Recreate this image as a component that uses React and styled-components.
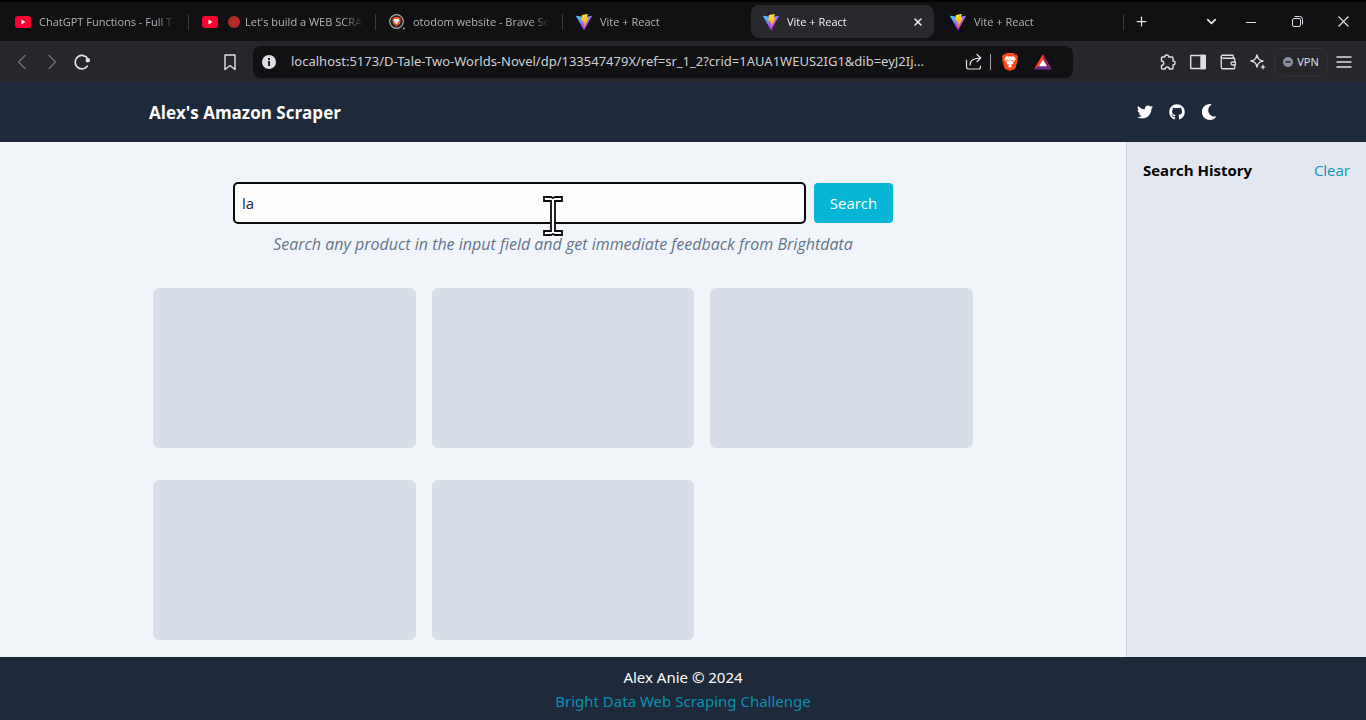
import React, { useId, useState } from "react";
import styled, { createGlobalStyle } from "styled-components";
import { Wallet, X, Plus, ChevronDown } from "lucide-react";
import { FaTwitter, FaGithub, FaMoon } from "react-icons/fa";

const GlobalStyle = createGlobalStyle`
  *, *::before, *::after { box-sizing: border-box; }
  body {
    margin: 0;
    font-family: "Open Sans", "Noto Sans", sans-serif;
    font-size: 15px;
    line-height: 24px;
    background: #f1f5f9;
  }
  button, input { font: inherit; }
  svg { display: block; flex: none; }
`;

const Window = styled.div`
  display: flex;
  flex-direction: column;
  min-height: 100vh;
`;

const TitleBar = styled.div`
  display: flex;
  align-items: center;
  height: 41px;
  padding-left: 3px;
  background: #111113;
  border-top: 2px solid #030303;
`;

const TabStrip = styled.nav`
  display: flex;
  align-items: center;
  flex: 0 1 1122px;
  min-width: 0;
`;

const Divider = styled.span`
  flex: none;
  width: 1px;
  height: 16px;
  margin: 0 1px 0 2px;
  background: ${(p) => (p.$hidden ? "transparent" : "#3a3a3e")};
`;

const Tab = styled.button`
  display: flex;
  align-items: center;
  gap: 8px;
  flex: 0 1 183px;
  min-width: 0;
  height: 33px;
  padding: 0 10px 0 12px;
  border: 0;
  border-radius: 8px;
  background: ${(p) => (p.$active ? "#28282d" : "transparent")};
  color: ${(p) => (p.$active ? "#f4f4f5" : "#b4b4b8")};
  font-size: 11px;
  line-height: 16px;
  text-align: left;
`;

const TabLabel = styled.span`
  display: flex;
  align-items: center;
  gap: 5px;
  flex: 1;
  overflow: hidden;
  white-space: nowrap;
  mask-image: linear-gradient(to right, #000 calc(100% - 20px), transparent);
`;

const LiveDot = styled.span`
  flex: none;
  width: 12px;
  height: 12px;
  margin-left: 2px;
  border-radius: 50%;
  background: #b32a29;
`;

const IconButton = styled.button`
  display: flex;
  align-items: center;
  justify-content: center;
  flex: none;
  width: ${(p) => p.$width || 30}px;
  height: 30px;
  padding: 0;
  border: 0;
  background: none;
  color: ${(p) => (p.$dim ? "#707075" : "#e0e0e4")};
`;

const WindowControls = styled.div`
  display: flex;
  margin-left: auto;
`;

const Toolbar = styled.div`
  display: flex;
  align-items: center;
  height: 41px;
  padding: 0 7px;
  background: #26262b;
`;

const NavGroup = styled.div`
  display: flex;
  align-items: center;
`;

const AddressGroup = styled.div`
  display: flex;
  align-items: center;
  gap: 8px;
  flex: 1;
  min-width: 0;
  margin: 0 80px 0 118px;
`;

const AddressBar = styled.div`
  display: flex;
  align-items: center;
  flex: 1;
  min-width: 0;
  height: 32px;
  padding: 0 13px 0 9px;
  border-radius: 8px;
  background: #111113;
`;

const AddressInput = styled.input`
  flex: 1;
  min-width: 0;
  margin: 0 4px 0 15px;
  padding: 0 0 2px;
  border: 0;
  outline: 0;
  background: none;
  color: #d0d0d4;
  font-family: "Noto Sans", sans-serif;
  font-size: 13px;
  line-height: 20px;
  text-overflow: ellipsis;
`;

const AddressDivider = styled.span`
  width: 1px;
  height: 16px;
  margin: 0 3px 0 0;
  background: #a0a0a4;
`;

const VpnButton = styled.button`
  display: flex;
  align-items: center;
  justify-content: center;
  gap: 4px;
  width: 54px;
  height: 28px;
  margin: 0 0 0 1px;
  padding: 0;
  border: 1px solid #303035;
  border-radius: 8px;
  background: none;
  color: #e4e4e8;
  font-size: 11px;
  line-height: 16px;
`;

const Header = styled.header`
  padding: 0 24px;
  background: #1e293b;
`;

const HeaderInner = styled.div`
  display: flex;
  align-items: center;
  justify-content: space-between;
  max-width: 1068px;
  height: 60px;
  margin: 0 auto;
`;

const Brand = styled.h1`
  margin: 0;
  padding-top: 2px;
  color: #fff;
  font-size: 17px;
  font-weight: 700;
`;

const HeaderLinks = styled.div`
  display: flex;
  align-items: center;
  gap: 16px;
  color: #fff;

  a, button {
    display: flex;
    padding: 0;
    border: 0;
    background: none;
    color: inherit;
  }
`;

const Body = styled.div`
  display: flex;
  flex: 1;
`;

const Main = styled.main`
  flex: 1;
  min-width: 0;
  padding: 40px 16px 17px;
  background: #f1f5f9;
`;

const SearchForm = styled.form`
  position: relative;
  display: flex;
  align-items: center;
  gap: 8px;
  max-width: 660px;
  margin: 0 auto;
`;

const SearchInput = styled.input`
  flex: 1;
  min-width: 0;
  height: 42px;
  padding: 0 7px;
  border: 2px solid #0c0c0e;
  border-radius: 5px;
  outline: 0;
  background: #fefefc;
  color: #1e293b;
`;

const SearchButton = styled.button`
  width: 79px;
  height: 40px;
  padding: 0;
  border: 0;
  border-radius: 4px;
  background: #06b6d4;
  color: #fff;
`;

const Pointer = styled.svg`
  position: absolute;
  top: 14px;
  left: 310px;
  pointer-events: none;
`;

const Hint = styled.p`
  margin: 8px 0 32px;
  color: #64748b;
  font-size: 16px;
  font-style: italic;
  text-align: center;
`;

const CardGrid = styled.div`
  display: grid;
  grid-template-columns: repeat(3, 1fr);
  gap: 32px 16px;
  max-width: 820px;
  margin: 0 auto;
`;

const SkeletonCard = styled.div`
  height: 160px;
  border-radius: 6px;
  background: #d8dee8;
`;

const Sidebar = styled.aside`
  flex: none;
  width: 240px;
  padding: 16px;
  border-left: 1px solid #cbd1dc;
  background: #e2e7f0;
`;

const SidebarHead = styled.div`
  display: flex;
  align-items: center;
  justify-content: space-between;
`;

const SidebarTitle = styled.h2`
  margin: 0;
  color: #030303;
  font-size: 15px;
  font-weight: 700;
`;

const ClearButton = styled.button`
  padding: 0;
  border: 0;
  background: none;
  color: #0e98ba;
`;

const Footer = styled.footer`
  padding: 8px 0 7px;
  background: #1e293b;
  color: #fff;
  font-family: "Noto Sans", sans-serif;
  text-align: center;

  p { margin: 0; }
  a { color: #0891b2; text-decoration: none; }
`;

function YoutubeIcon() {
  return (
    <svg width="16" height="16" viewBox="0 0 16 16">
      <rect y="2" width="16" height="12" rx="3" fill="#ff0033" />
      <path d="M6.5 5.5v5L10.5 8z" fill="#fff" />
    </svg>
  );
}

function ViteIcon() {
  const id = useId();
  return (
    <svg width="16" height="16" viewBox="0 0 256 257">
      <defs>
        <linearGradient id={id + "a"} x1="-.8%" y1="7.7%" x2="57.6%" y2="78.4%">
          <stop offset="0" stopColor="#41d1ff" />
          <stop offset="1" stopColor="#bd34fe" />
        </linearGradient>
        <linearGradient id={id + "b"} x1="43.4%" y1="2.2%" x2="50.3%" y2="89%">
          <stop offset="0" stopColor="#ffea83" />
          <stop offset=".083" stopColor="#ffdd35" />
          <stop offset="1" stopColor="#ffa800" />
        </linearGradient>
      </defs>
      <path
        fill={`url(#${id}a)`}
        d="M255.153 37.938L134.897 252.976c-2.483 4.44-8.862 4.466-11.382.048L.875 37.958c-2.746-4.814 1.371-10.646 6.827-9.67l120.385 21.517a6.537 6.537 0 0 0 2.322-.004l117.867-21.483c5.438-.991 9.574 4.796 6.877 9.62Z"
      />
      <path
        fill={`url(#${id}b)`}
        d="M185.432.063L96.44 17.501a3.268 3.268 0 0 0-2.634 3.014l-5.474 92.456a3.268 3.268 0 0 0 3.997 3.378l24.777-5.718c2.318-.535 4.413 1.507 3.936 3.838l-7.361 36.047c-.495 2.426 1.782 4.5 4.151 3.78l15.304-4.649c2.372-.72 4.652 1.36 4.15 3.788l-11.698 56.621c-.732 3.542 3.979 5.473 5.943 2.437l1.313-2.028l72.516-144.72c1.215-2.423-.88-5.186-3.54-4.672l-25.505 4.922c-2.396.462-4.435-1.77-3.759-4.114l16.646-57.705c.677-2.35-1.37-4.583-3.769-4.113Z"
      />
    </svg>
  );
}

function BraveSearchIcon() {
  return (
    <svg width="16" height="16" viewBox="0 0 16 16" fill="none">
      <circle cx="7.5" cy="7.5" r="6.8" fill="#242428" stroke="#a9a9ad" strokeWidth="1.2" />
      <path d="M5.3 3h4.4l2 1.8-.5 4.5-3.7 3.2L3.8 9.3l-.5-4.5z" fill="#f1502b" />
      <path d="M5.3 5h4.4l.6 1.6-1.5 2.5-1.3 1-1.3-1-1.5-2.500z" fill="#fff" />
      <circle cx="14.8" cy="14.4" r="1" fill="#a9a9ad" />
    </svg>
  );
}

function BraveIcon() {
  return (
    <svg width="16" height="18" viewBox="0 0 16 18">
      <path
        d="M4.5 0h7l1.5 1.5 1.6-.2L16 3.8l-.6 1.7.4 1.5-2 7.2c-.3 1-1 1.6-1.7 2L8 18l-4.1-1.8c-.7-.4-1.4-1-1.7-2L.2 7l.4-1.5L0 3.8l1.4-2.5 1.6.2z"
        fill="#fb4b1a"
      />
      <path
        d="M4.2 3.3 6.5 3.7 8 3.3l1.5.4 2.3-.4L13.6 5.8l-.5 1.5-2.2 2.3.3 1.2-1.2 1-1-.6-.4.9 1.6 1L8 14.8l-2.2-1.7 1.6-1-.4-.9-1 .6-1.2-1 .3-1.2L2.9 7.3 2.4 5.8z"
        fill="#fff"
      />
      <path d="M3.8 6.6 6.7 7.4 6.4 8.3 4.9 8zM12.2 6.6 9.3 7.4 9.6 8.3 11.1 8z" fill="#fb4b1a" />
      <path d="M7.2 5h1.6L8.4 8.8H7.6z" fill="#fb4b1a" opacity=".35" />
    </svg>
  );
}

function RewardsIcon() {
  return (
    <svg width="18" height="16" viewBox="0 0 18 16">
      <path d="M9 0 0 15.5 9 10z" fill="#ff4724" />
      <path d="M9 0l9 15.5L9 10z" fill="#9e1f63" />
      <path d="M0 15.5h18L9 9z" fill="#662d91" />
      <path d="M9 5.5 5 12.3h8z" fill="#fff" />
    </svg>
  );
}

function Line({ size = 18, width = 1.4, children }) {
  return (
    <svg
      width={size}
      height={size}
      viewBox="0 0 18 18"
      fill="none"
      stroke="currentColor"
      strokeWidth={width}
      strokeLinejoin="round"
      strokeLinecap="round"
    >
      {children}
    </svg>
  );
}

const TABS = [
  { icon: YoutubeIcon, title: "ChatGPT Functions - Full T" },
  { icon: YoutubeIcon, title: "Let's build a WEB SCRA", live: true },
  { icon: BraveSearchIcon, title: "otodom website - Brave Se" },
  { icon: ViteIcon, title: "Vite + React" },
  { icon: ViteIcon, title: "Vite + React", active: true },
  { icon: ViteIcon, title: "Vite + React" },
];

function BrowserTabs() {
  return (
    <TitleBar>
      <TabStrip aria-label="Tabs">
        {TABS.map((tab, i) => (
          <React.Fragment key={i}>
            <Tab type="button" $active={tab.active}>
              <tab.icon />
              <TabLabel>
                {tab.live && <LiveDot />}
                {tab.title}
              </TabLabel>
              {tab.active && <X size={12} strokeWidth={3} />}
            </Tab>
            <Divider $hidden={tab.active || TABS[i + 1]?.active} />
          </React.Fragment>
        ))}
      </TabStrip>
      <IconButton aria-label="New tab" $width={32}>
        <Plus size={15} />
      </IconButton>
      <WindowControls>
        <IconButton aria-label="Search tabs" $width={34}>
          <ChevronDown size={15} strokeWidth={3} />
        </IconButton>
        <IconButton aria-label="Minimize" $width={46}>
          <svg width="10" height="10" stroke="currentColor"><path d="M0 5.5h10" /></svg>
        </IconButton>
        <IconButton aria-label="Restore" $width={46}>
          <svg width="11" height="11" fill="none" stroke="currentColor">
            <rect x=".5" y="2.5" width="8" height="8" rx="1.5" />
            <path d="M2.5 .5h5a3 3 0 0 1 3 3v5" />
          </svg>
        </IconButton>
        <IconButton aria-label="Close" $width={46}>
          <svg width="11" height="11" stroke="currentColor" strokeWidth="1.2">
            <path d="M.5 .5l10 10M10.5 .5l-10 10" />
          </svg>
        </IconButton>
      </WindowControls>
    </TitleBar>
  );
}

function BrowserToolbar() {
  const [url, setUrl] = useState(
    "localhost:5173/D-Tale-Two-Worlds-Novel/dp/133547479X/ref=sr_1_2?crid=1AUA1WEUS2IG1&dib=eyJ2Ij..."
  );
  return (
    <Toolbar>
      <NavGroup>
        <IconButton aria-label="Back" $dim>
          <Line><path d="M12 2.5 5.5 9l6.5 6.5" /></Line>
        </IconButton>
        <IconButton aria-label="Forward" $dim>
          <Line><path d="M6 2.5 12.5 9 6 15.5" /></Line>
        </IconButton>
        <IconButton aria-label="Reload">
          <Line width={1.7}>
            <path d="M14.2 13.2A6.7 6.7 0 1 1 14.8 6" />
            <circle cx="14.8" cy="7.3" r="1.4" fill="currentColor" />
          </Line>
        </IconButton>
      </NavGroup>
      <AddressGroup>
        <IconButton aria-label="Bookmark">
          <Line><path d="M4 2h10v14.5l-5-4-5 4z" /></Line>
        </IconButton>
        <AddressBar>
          <svg width="14" height="14" viewBox="0 0 14 14" fill="#e0e0e4">
            <circle cx="7" cy="7" r="7" />
            <path d="M6 3h2v2H6zM6 6h2v5H6z" fill="#222226" />
          </svg>
          <AddressInput
            aria-label="Address"
            value={url}
            onChange={(e) => setUrl(e.target.value)}
          />
          <IconButton aria-label="Share" $width={32}>
            <Line width={1.2}>
              <path d="M1.5 7v6.5a2.5 2.5 0 0 0 2.5 2.5h9.5a2 2 0 0 0 2-2v-1" />
              <path d="M5 12c0-4 3-7 10.5-7M12 1.5 15.8 5 12 8.5" />
            </Line>
          </IconButton>
          <AddressDivider />
          <IconButton aria-label="Shields" $width={32}>
            <BraveIcon />
          </IconButton>
          <IconButton aria-label="Rewards" $width={34}>
            <RewardsIcon />
          </IconButton>
        </AddressBar>
      </AddressGroup>
      <NavGroup>
        <IconButton aria-label="Extensions">
          <Line>
            <path d="M3.5 4h2.3a2 2 0 1 1 4 0h3.200a1 1 0 0 1 1 1v3a2 2 0 1 1 0 4v3a1 1 0 0 1-1 1H10.300a2 2 0 0 0-4 0H3.500a1 1 0 0 1-1-1v-2.500a2.200 2.200 0 0 0 0-4.500V5a1 1 0 0 1 1-1z" />
          </Line>
        </IconButton>
        <IconButton aria-label="Side panel">
          <Line>
            <rect x="1.7" y="2.5" width="14.5" height="13" />
            <path d="M12 2.5h4.2v13H12z" fill="currentColor" />
          </Line>
        </IconButton>
        <IconButton aria-label="Wallet">
          <Wallet size={18} strokeWidth={1.7} />
        </IconButton>
        <IconButton aria-label="Assistant">
          <Line>
            <path d="M8 2c1 4 2 5 6 6-4 1-5 2-6 6-1-4-2-5-6-6 4-1 5-2 6-6z" />
            <path d="M14 11l.8 2.2 2.2.8-2.2.8L14 17l-.8-2.2L11 14l2.2-.8z" fill="currentColor" stroke="none" />
          </Line>
        </IconButton>
        <VpnButton>
          <svg width="10" height="10">
            <circle cx="5" cy="5" r="5" fill="#8c8ea4" />
            <path d="M2.5 4h5v2h-5z" fill="#35363f" />
          </svg>
          VPN
        </VpnButton>
        <IconButton aria-label="Menu" $width={31}>
          <Line><path d="M2 4h14M2 9h14M2 14h14" /></Line>
        </IconButton>
      </NavGroup>
    </Toolbar>
  );
}

export default function App() {
  const [query, setQuery] = useState("la");
  return (
    <Window>
      <GlobalStyle />
      <BrowserTabs />
      <BrowserToolbar />
      <Header>
        <HeaderInner>
          <Brand>Alex's Amazon Scraper</Brand>
          <HeaderLinks>
            <a href="#twitter" aria-label="Twitter"><FaTwitter size={16} /></a>
            <a href="#github" aria-label="GitHub"><FaGithub size={16} /></a>
            <button type="button" aria-label="Dark mode"><FaMoon size={16} /></button>
          </HeaderLinks>
        </HeaderInner>
      </Header>
      <Body>
        <Main>
          <SearchForm onSubmit={(e) => e.preventDefault()}>
            <SearchInput
              aria-label="Search product"
              value={query}
              onChange={(e) => setQuery(e.target.value)}
            />
            <SearchButton type="submit">Search</SearchButton>
            <Pointer width="20" height="40" viewBox="0 0 20 40">
              <path
                d="M1 1h7l2 1 2-1h7v4h-7v30h7v4h-7l-2-1-2 1H1v-4h7V5H1z"
                fill="#fff"
                stroke="#0c0c0e"
                strokeWidth="1.8"
              />
            </Pointer>
          </SearchForm>
          <Hint>Search any product in the input field and get immediate feedback from Brightdata</Hint>
          <CardGrid>
            {[1, 2, 3, 4, 5].map((n) => (
              <SkeletonCard key={n} />
            ))}
          </CardGrid>
        </Main>
        <Sidebar>
          <SidebarHead>
            <SidebarTitle>Search History</SidebarTitle>
            <ClearButton type="button">Clear</ClearButton>
          </SidebarHead>
        </Sidebar>
      </Body>
      <Footer>
        <p>Alex Anie © 2024</p>
        <p><a href="#challenge">Bright Data Web Scraping Challenge</a></p>
      </Footer>
    </Window>
  );
}
